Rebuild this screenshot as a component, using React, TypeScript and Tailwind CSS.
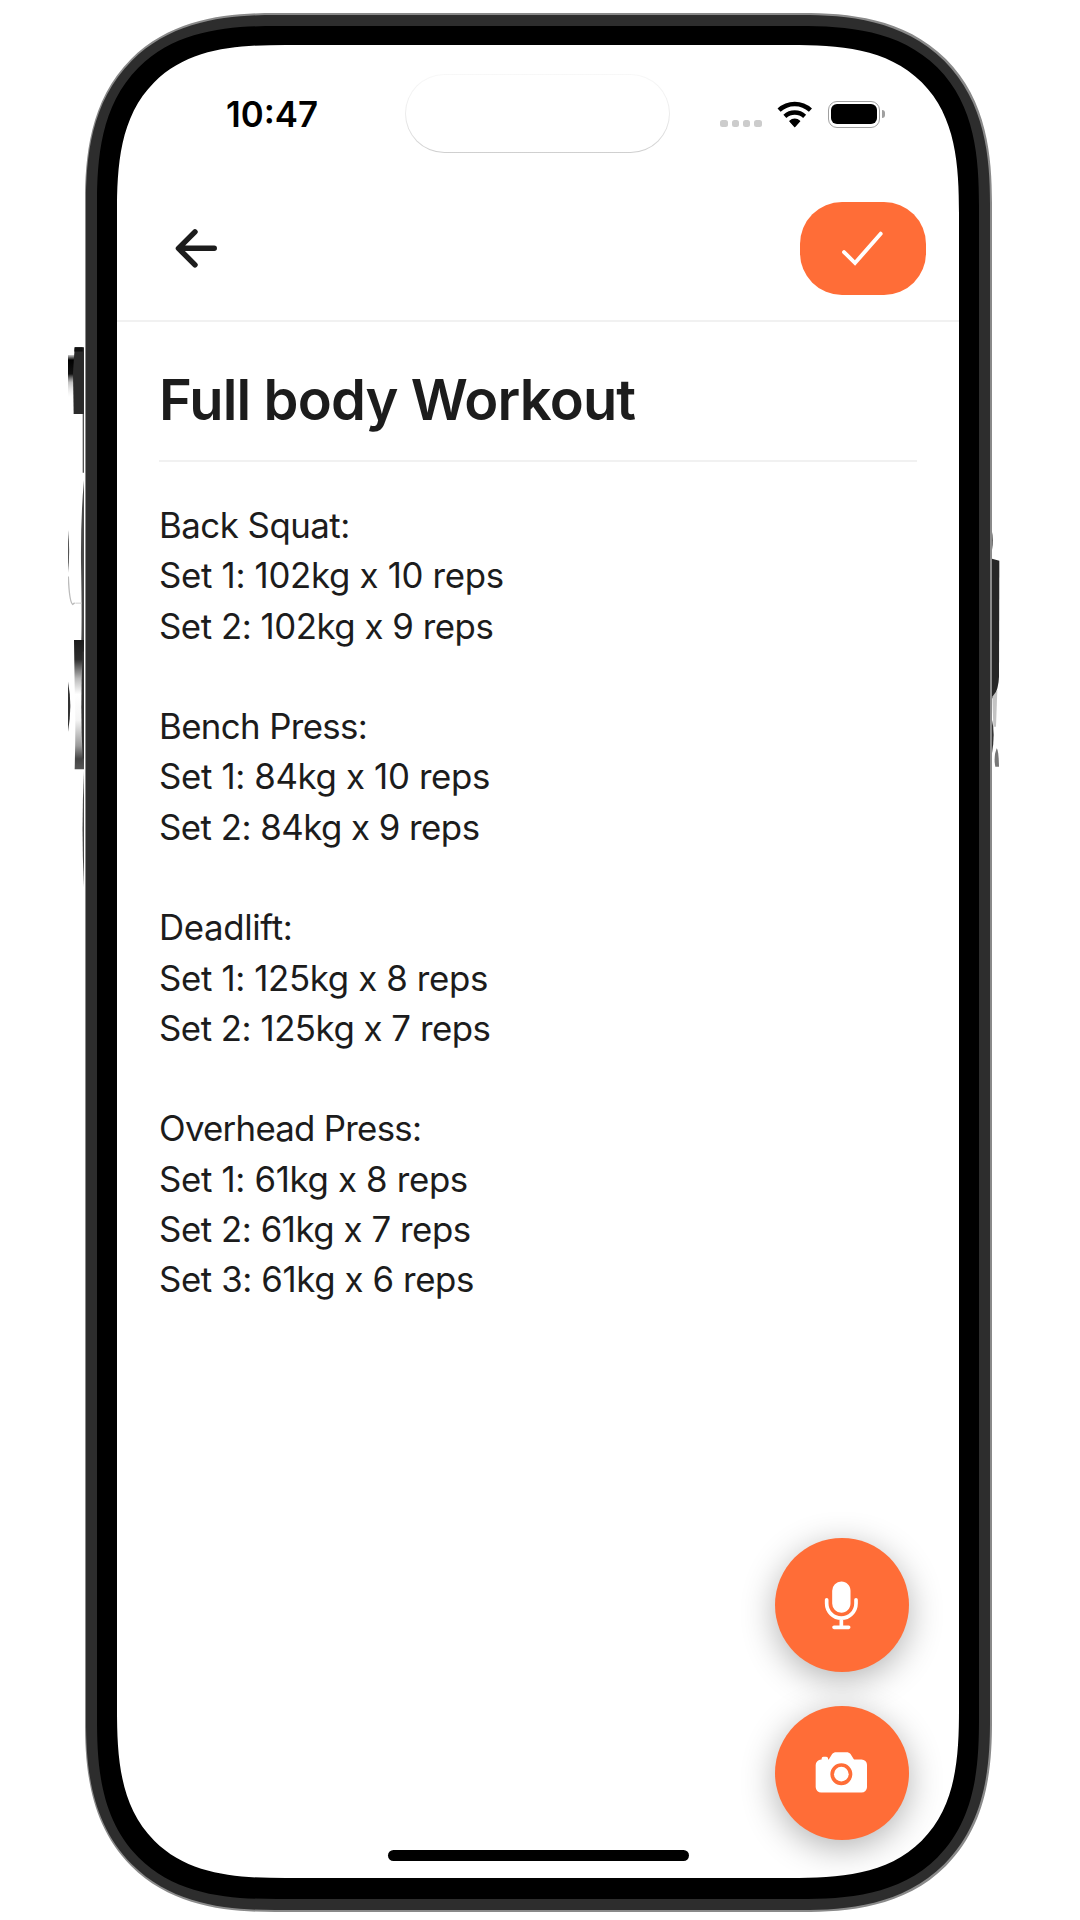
import { IoArrowBack, IoCamera, IoMic } from "react-icons/io5";

type Line = { text: string; tracking: string };

const exercises: Line[][] = [
  [
    { text: "Back Squat:", tracking: "tracking-[-0.5px]" },
    { text: "Set 1: 102kg x 10 reps", tracking: "tracking-[-0.31px]" },
    { text: "Set 2: 102kg x 9 reps", tracking: "tracking-[-0.47px]" },
  ],
  [
    { text: "Bench Press:", tracking: "tracking-[-0.62px]" },
    { text: "Set 1: 84kg x 10 reps", tracking: "tracking-[-0.35px]" },
    { text: "Set 2: 84kg x 9 reps", tracking: "tracking-[-0.52px]" },
  ],
  [
    { text: "Deadlift:", tracking: "tracking-[-0.35px]" },
    { text: "Set 1: 125kg x 8 reps", tracking: "tracking-[-0.35px]" },
    { text: "Set 2: 125kg x 7 reps", tracking: "tracking-[-0.48px]" },
  ],
  [
    { text: "Overhead Press:", tracking: "tracking-[-0.72px]" },
    { text: "Set 1: 61kg x 8 reps", tracking: "tracking-[-0.33px]" },
    { text: "Set 2: 61kg x 7 reps", tracking: "tracking-[-0.45px]" },
    { text: "Set 3: 61kg x 6 reps", tracking: "tracking-[-0.4px]" },
  ],
];

function LeftButtons() {
  return (
    <svg className="absolute left-[-17px] top-[317px] h-[560px] w-[22px]" viewBox="54 0 66 1568" preserveAspectRatio="none">
      <defs>
        <linearGradient id="smudge" x1="0" y1="0" x2="0" y2="1">
          <stop offset="0" stopColor="#000" stopOpacity="0.2" />
          <stop offset="0.12" stopColor="#000" />
          <stop offset="0.45" stopColor="#111" />
          <stop offset="0.65" stopColor="#999" stopOpacity="0.6" />
          <stop offset="1" stopColor="#ddd" stopOpacity="0" />
        </linearGradient>
        <linearGradient id="volume" x1="0" y1="0" x2="0" y2="1">
          <stop offset="0" stopColor="#1c1c1c" />
          <stop offset="0.15" stopColor="#2d2d2d" />
          <stop offset="0.3" stopColor="#bbb" />
          <stop offset="0.42" stopColor="#fff" />
          <stop offset="0.62" stopColor="#f4f4f4" />
          <stop offset="0.82" stopColor="#999" />
          <stop offset="0.92" stopColor="#444" />
          <stop offset="1" stopColor="#555" />
        </linearGradient>
      </defs>
      <rect x="54" y="70" width="18" height="118" fill="url(#smudge)" />
      <path d="M74 48H102V235H71L69 120Z" fill="#2b2b2b" />
      <path d="M74 48H98V60H73Z" fill="#111" />
      <path d="M102 235H98V400H102Z" fill="#555" />
      <path d="M102 420Q92 520 93 650Q96 800 94 868H102Z" fill="#4a4a4a" />
      <path d="M54 560Q61 620 54 680Z" fill="#555" />
      <path d="M55 690Q58 762 68 768L74 764" fill="none" stroke="#bbb" strokeWidth="4" />
      <path d="M76 765H94" stroke="#ddd" strokeWidth="4" />
      <path d="M72 868H102V1230H74Q78 1100 74 1000Z" fill="url(#volume)" />
      <path d="M102 900H98Q90 1060 98 1200H102Z" fill="#333" />
      <path d="M54 985Q68 1050 54 1125Z" fill="#333" />
      <path d="M102 1235Q93 1400 102 1560Z" fill="#4a4a4a" />
    </svg>
  );
}

function PowerButton() {
  return (
    <svg className="absolute left-[905px] top-[517px] h-[260px] w-[12px]" viewBox="150 0 36 780" preserveAspectRatio="none">
      <path d="M155 0Q162 30 156 60Z" fill="#555" />
      <path d="M156 86L178 92L177 440Q176 475 160 505H156Z" fill="#262626" />
      <path d="M157 500L172 480L168 590H160Z" fill="#c4c4c4" />
      <path d="M156 570Q166 610 156 670Z" fill="#333" />
      <path d="M170 655Q176 660 177 710H166Q160 680 170 655Z" fill="#777" />
    </svg>
  );
}

function StatusBar() {
  return (
    <div className="flex h-[138px] items-start pl-[109px] pr-[74px]">
      <div className="mt-[47.5px] w-[179px] text-[34.8px] font-semibold leading-[42px] tracking-[0px] text-black">
        10:47
      </div>
      {/* Dynamic island: a hairline that fades toward the top */}
      <div className="mt-[29px] h-[79px] w-[264.5px] rounded-full bg-linear-to-b from-[#f8f8f8] via-[#ececec] to-[#cfcfcf] p-px">
        <div className="h-full w-full rounded-full bg-white" />
      </div>
      <div className="ml-auto mt-[55.500px] flex h-[28px] items-start">
        <div className="mr-[15.500px] mt-[19px] flex gap-[3.9px]">
          {[0, 1, 2, 3].map((n) => (
            <div key={n} className="h-[7.4px] w-[7.4px] rounded-[2.5px] bg-[#cccccc]" />
          ))}
        </div>
        <svg className="mr-[15.5px] h-[27px] w-[35.5px]" viewBox="0 0 106.5 81" fill="none" stroke="#000">
          <path d="M6.200 27.600A69 69 0 0 1 100.300 27.600" strokeWidth="13.500" />
          <path d="M23.600 46.200A43.500 43.500 0 0 1 82.900 46.200" strokeWidth="13" />
          <path d="M53.250 77L38.500 60.500A22 22 0 0 1 68 60.500Z" fill="#000" strokeWidth="4" strokeLinejoin="round" />
        </svg>
        <div className="flex items-center">
          <div className="h-[27px] w-[52px] rounded-[9px] border-[1.6px] border-[#a0a0a0] p-[2.2px]">
            <div className="h-full w-full rounded-[6px] bg-black" />
          </div>
          <div className="ml-[2px] h-[8.500px] w-[3px] rounded-r-full bg-[#a0a0a0]" />
        </div>
      </div>
    </div>
  );
}

export default function App() {
  return (
    <div className="h-[1920px] w-[1080px] overflow-hidden bg-white pl-[84.500px] pt-[13px] font-[Inter,sans-serif]">
      <div className="relative h-[1899px] w-[907px]">
        <LeftButtons />
        <PowerButton />
        <div className="relative h-full w-full rounded-[190px] bg-[#8a8a8a] p-[1.5px] pb-[2px] [corner-shape:superellipse(1.32)]">
          <div className="h-full w-full rounded-[189px] bg-[#2d2d2d] pb-[11px] pl-[11px] pr-[11px] pt-[11px] [corner-shape:superellipse(1.32)]">
            <div className="h-full w-full rounded-[180px] bg-black pb-[21.500px] pl-[20px] pr-[20px] pt-[19.500px] [corner-shape:superellipse(1.4)]">
              <div className="relative flex h-full w-full flex-col overflow-hidden rounded-[169px] bg-white [corner-shape:superellipse(1.475)]">
                <StatusBar />
                <header className="flex h-[139px] shrink-0 items-center justify-between border-b-2 border-[#f1f1f1] pb-[6.500px] pl-[50px] pr-[33.500px]">
                  <IoArrowBack className="h-[58.700px] w-[58.700px] text-[#1c1c1c]" />
                  <button className="flex h-[93px] w-[126px] items-center justify-center rounded-[42px] bg-[#ff6d37]">
                    <svg className="mt-[1px] h-[58.700px] w-[58.700px]" viewBox="0 0 512 512" fill="none" stroke="#fff" strokeWidth="34" strokeLinecap="round">
                      <path d="M416 128 192 384 96 288" />
                    </svg>
                  </button>
                </header>
                <main className="px-[42px] text-[#1c1c1c]">
                  <h1 className="h-[140px] border-b-2 border-[#f1f1f1] pt-[44px] text-[56px] font-semibold leading-[68px] tracking-[-0.84px]">
                    Full body Workout
                  </h1>
                  <div className="flex flex-col gap-[50.280px] pt-[38px] text-[34.800px] leading-[50.280px]">
                    {exercises.map((lines) => (
                      <div key={lines[0].text}>
                        {lines.map((line) => (
                          <p key={line.text} className={line.tracking}>
                            {line.text}
                          </p>
                        ))}
                      </div>
                    ))}
                  </div>
                </main>
                <div className="absolute bottom-[38px] right-[50.500px] flex flex-col gap-[33.500px]">
                  <button className="flex h-[134px] w-[134px] items-center justify-center rounded-full bg-[#ff6d37] text-white shadow-[0_8px_34px_rgba(0,0,0,0.3)]">
                    <IoMic className="h-[58.700px] w-[58.700px]" />
                  </button>
                  <button className="flex h-[134px] w-[134px] items-center justify-center rounded-full bg-[#ff6d37] text-white shadow-[0_8px_34px_rgba(0,0,0,0.3)]">
                    <IoCamera className="h-[58.700px] w-[58.700px]" />
                  </button>
                </div>
                <div className="mx-auto mb-[17px] mt-auto h-[10.700px] w-[301px] shrink-0 rounded-full bg-black" />
              </div>
            </div>
          </div>
        </div>
      </div>
    </div>
  );
}
